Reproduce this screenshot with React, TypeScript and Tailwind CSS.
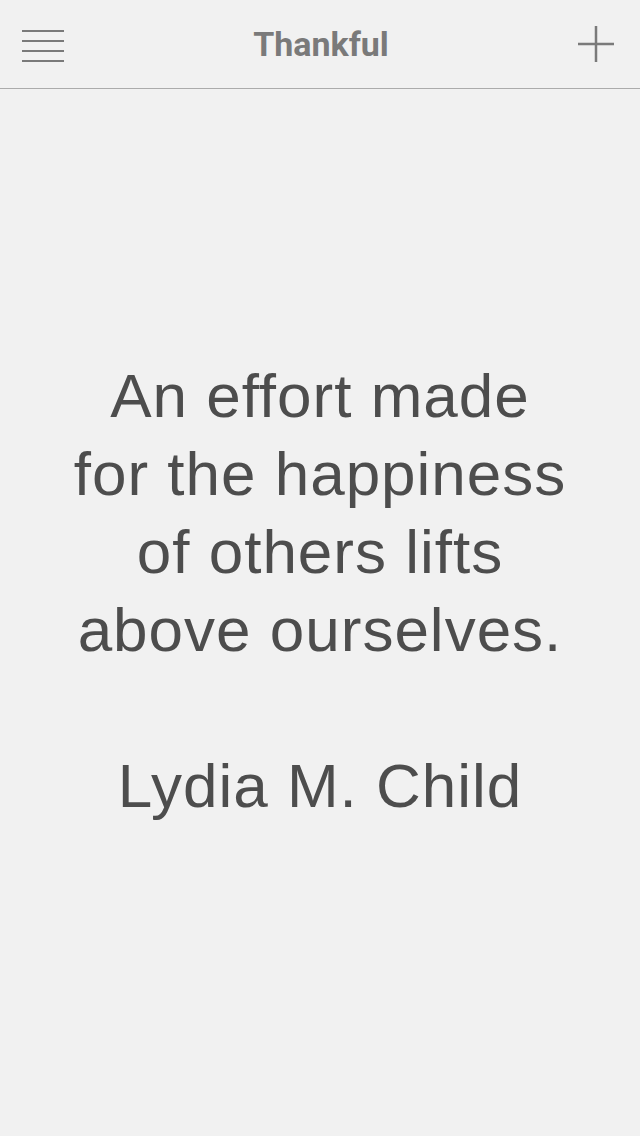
import React from "react";

export default function App() {
  return (
    <div className="min-h-[1136px] w-full bg-[#f1f1f1] flex flex-col">
      <header className="h-[89px] border-b border-[#ababab] flex items-center justify-between px-[22px] shrink-0">
        <button className="w-[42px] h-[32px] flex flex-col justify-between mt-[3px]" aria-label="menu">
          <span className="block h-[2px] w-full bg-[#7a7a7a]" />
          <span className="block h-[2px] w-full bg-[#7a7a7a]" />
          <span className="block h-[2px] w-full bg-[#7a7a7a]" />
          <span className="block h-[2px] w-full bg-[#7a7a7a]" />
        </button>
        <h1
          className="text-[34px] font-bold text-[#7a7a7a] leading-none"
          style={{ fontFamily: "Roboto, 'Liberation Sans', sans-serif" }}
        >
          Thankful
        </h1>
        <button className="w-[36px] h-[36px] mr-[4px]" aria-label="add">
          <svg width="36" height="36" viewBox="0 0 36 36">
            <line x1="18" y1="0" x2="18" y2="36" stroke="#7a7a7a" strokeWidth="2.5" />
            <line x1="0" y1="18" x2="36" y2="18" stroke="#7a7a7a" strokeWidth="2.5" />
          </svg>
        </button>
      </header>
      <main
        className="flex flex-col items-center pt-[268px] text-[62px] leading-[78px] tracking-[1px] text-[#4d4d4d] text-center"
        style={{ fontFamily: "'Liberation Sans', Arial, sans-serif" }}
      >
        <p>
          <span className="block">An effort made</span>
          <span className="block">for the happiness</span>
          <span className="block">of others lifts</span>
          <span className="block">above ourselves.</span>
        </p>
        <p className="mt-[78px]">Lydia M. Child</p>
      </main>
    </div>
  );
}
